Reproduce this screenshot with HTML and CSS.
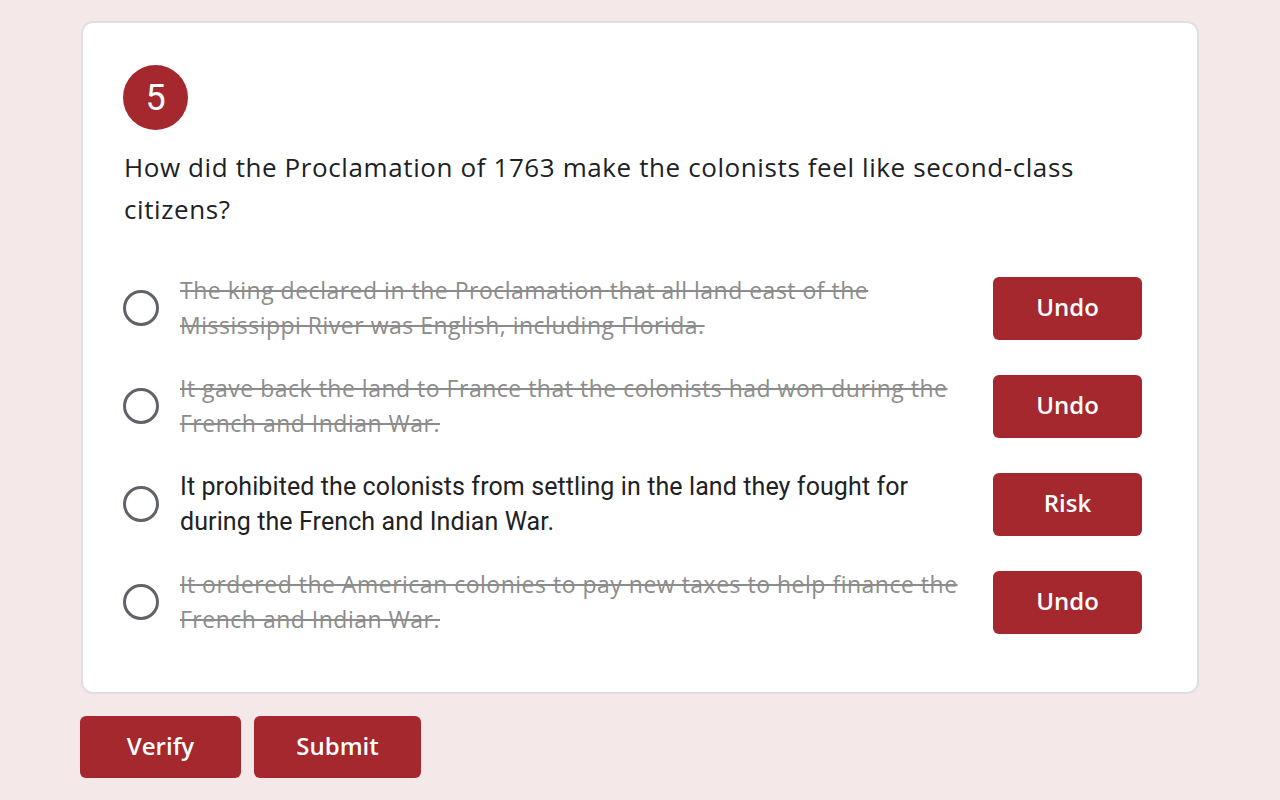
FILE: index.html
```html
<!DOCTYPE html>
<html lang="en">
<head>
<meta charset="utf-8">
<title>Question 5</title>
<link rel="stylesheet" href="styles.css">
</head>
<body>
<main class="page">
  <section class="card">
    <div class="badge">5</div>
    <h1 class="question">How did the Proclamation of 1763 make the colonists feel like second-class citizens?</h1>
    <ul class="options">
      <li class="option">
        <span class="radio"></span>
        <span class="opt-text struck">The king declared in the Proclamation that all land east of the Mississippi River was English, including Florida.</span>
        <button class="btn opt-btn">Undo</button>
      </li>
      <li class="option">
        <span class="radio"></span>
        <span class="opt-text struck">It gave back the land to France that the colonists had won during the French and Indian War.</span>
        <button class="btn opt-btn">Undo</button>
      </li>
      <li class="option">
        <span class="radio"></span>
        <span class="opt-text live">It prohibited the colonists from settling in the land they fought for during the French and Indian War.</span>
        <button class="btn opt-btn">Risk</button>
      </li>
      <li class="option">
        <span class="radio"></span>
        <span class="opt-text struck">It ordered the American colonies to pay new taxes to help finance the French and Indian War.</span>
        <button class="btn opt-btn">Undo</button>
      </li>
    </ul>
  </section>
  <div class="actions">
    <button class="btn action verify">Verify</button>
    <button class="btn action submit">Submit</button>
  </div>
</main>
</body>
</html>
```

FILE: styles.css
```css
html, body {
  margin: 0;
  padding: 0;
}
body {
  background: #f5e8e9;
  font-family: "Open Sans", "Liberation Sans", sans-serif;
  color: #202124;
}
.page {
  padding: 21px 80px 0 80px;
  display: flex;
  flex-direction: column;
}
.card {
  width: 1118px;
  margin-left: 1px;
  box-sizing: border-box;
  background: #ffffff;
  border: 2px solid #dfdfe1;
  border-radius: 12px;
  padding: 42px 55px 55px 40px;
}
.badge {
  width: 65px;
  height: 65px;
  border-radius: 50%;
  background: #a4282e;
  color: #ffffff;
  font-family: Roboto, "Noto Sans", sans-serif;
  font-size: 36px;
  display: flex;
  align-items: center;
  justify-content: center;
}
.question {
  margin: 16px 0 0 1px;
  font-weight: 400;
  font-size: 26px;
  letter-spacing: 0.6px;
  line-height: 42px;
  color: #202124;
  max-width: 990px;
}
.options {
  list-style: none;
  margin: 43px 0 0 0;
  padding: 0;
  display: flex;
  flex-direction: column;
  gap: 28px;
}
.option {
  display: flex;
  align-items: center;
  min-height: 70px;
}
.radio {
  flex: none;
  width: 30px;
  height: 30px;
  border: 3px solid #5f6368;
  border-radius: 50%;
}
.opt-text {
  flex: 1;
  margin-left: 21px;
  margin-right: 30px;
  font-size: 23px;
  line-height: 35px;
}
.struck {
  font-family: "Open Sans", "Liberation Sans", sans-serif;
  letter-spacing: 0.5px;
  color: #8c8c8c;
  text-decoration: line-through;
}
.live {
  font-family: Roboto, "Noto Sans", sans-serif;
  font-size: 25px;
  letter-spacing: 0.1px;
  color: #202124;
}
.btn {
  border: none;
  background: #a4282e;
  color: #ffffff;
  font-family: "Open Sans", "Liberation Sans", sans-serif;
  font-weight: 600;
  font-size: 24px;
  line-height: 1;
  padding: 0 0 2px 0;
  border-radius: 6px;
  cursor: pointer;
}
.opt-btn {
  flex: none;
  width: 149px;
  height: 63px;
}
.actions {
  display: flex;
  gap: 13px;
  margin-top: 22px;
}
.action {
  height: 62px;
}
.verify {
  width: 161px;
}
.submit {
  width: 167px;
}
```
